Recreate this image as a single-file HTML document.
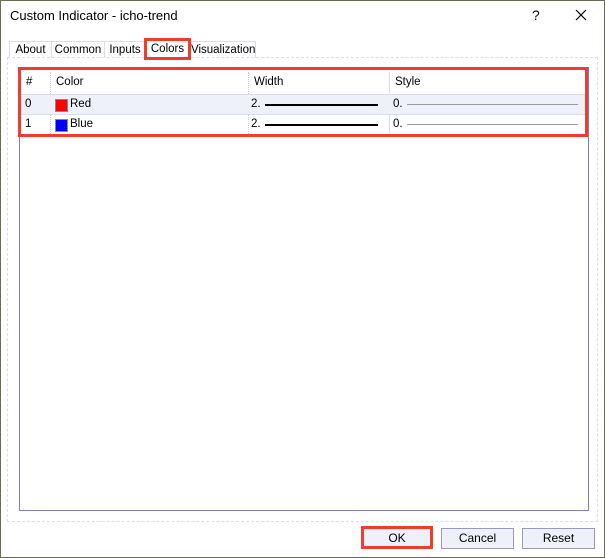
<html><head><style>
body{margin:0;width:605px;height:558px;background:#fff;font-family:"Liberation Sans",sans-serif;font-size:12px;color:#000;position:relative;overflow:hidden}
.a{position:absolute}
.tab{position:absolute;top:41px;height:16px;border:1px solid #dcdcf0;border-bottom:none;line-height:16px;text-align:center;font-size:11.5px}
.btn{position:absolute;top:528px;height:19px;border:1px solid #9a9ab8;background:#eef0fa;text-align:center;line-height:19px}
.row{position:absolute;left:20px;width:567px;height:19px;line-height:19px;font-size:11.5px}
</style></head><body>
<div class="a" style="left:0;top:0;width:603px;height:556px;border:1px solid #6b6b50"></div>
<div class="a" style="left:10px;top:8px;font-size:13px">Custom Indicator - icho-trend</div>
<div class="a" style="left:532px;top:7px;font-size:14px">?</div>
<svg class="a" style="left:575px;top:9px" width="12" height="12"><path d="M1 1L11 11M11 1L1 11" stroke="#000" stroke-width="1.2"/></svg>
<div class="a" style="left:7px;top:57px;width:589px;height:463px;border:1px dashed #dcdcf0"></div>
<div class="tab" style="left:9px;width:41px">About</div>
<div class="tab" style="left:51px;width:52px">Common</div>
<div class="tab" style="left:104px;width:40px">Inputs</div>
<div class="tab" style="left:190px;width:64px">Visualization</div>
<div class="a" style="left:144px;top:38px;width:41px;height:16px;border:3px solid #f03c2c;text-align:center;line-height:16px;background:#fff;font-size:11.5px">Colors</div>
<div class="a" style="left:19px;top:67px;width:568px;height:442px;border:1px solid #8080b0"></div>
<div class="row" style="top:72px;height:20px;line-height:20px"><span class="a" style="left:6px">#</span><span class="a" style="left:36px">Color</span><span class="a" style="left:234px">Width</span><span class="a" style="left:375px">Style</span></div>
<div class="a" style="left:50px;top:72px;width:0;height:62px;border-left:1px dotted #ccc"></div>
<div class="a" style="left:248px;top:72px;width:0;height:62px;border-left:1px dotted #ccc"></div>
<div class="a" style="left:389px;top:72px;width:0;height:62px;border-left:1px solid #dcdcf0"></div>
<div class="row" style="top:94px;background:#eef0fa;border-top:1px solid #dcdcf0"><span class="a" style="left:5px">0</span><span class="a" style="left:35px;top:4px;width:11px;height:11px;background:#f00;border:1px solid #888"></span><span class="a" style="left:50px">Red</span><span class="a" style="left:231px">2.</span><span class="a" style="left:245px;top:9px;width:113px;height:2px;background:#000"></span><span class="a" style="left:373px">0.</span><span class="a" style="left:387px;top:9px;width:171px;height:1px;background:#999"></span></div>
<div class="row" style="top:114px;border-top:1px solid #dcdcf0"><span class="a" style="left:5px">1</span><span class="a" style="left:35px;top:4px;width:11px;height:11px;background:#00f;border:1px solid #888"></span><span class="a" style="left:50px">Blue</span><span class="a" style="left:231px">2.</span><span class="a" style="left:245px;top:9px;width:113px;height:2px;background:#000"></span><span class="a" style="left:373px">0.</span><span class="a" style="left:387px;top:9px;width:171px;height:1px;background:#999"></span></div>
<div class="a" style="left:18px;top:67px;width:564px;height:64px;border:3px solid #f03c2c"></div>
<div class="btn" style="left:361px;top:526px;width:66px;border:3px solid #f03c2c;height:17px">OK</div>
<div class="btn" style="left:441px;width:71px">Cancel</div>
<div class="btn" style="left:522px;width:71px">Reset</div>
</body></html>
